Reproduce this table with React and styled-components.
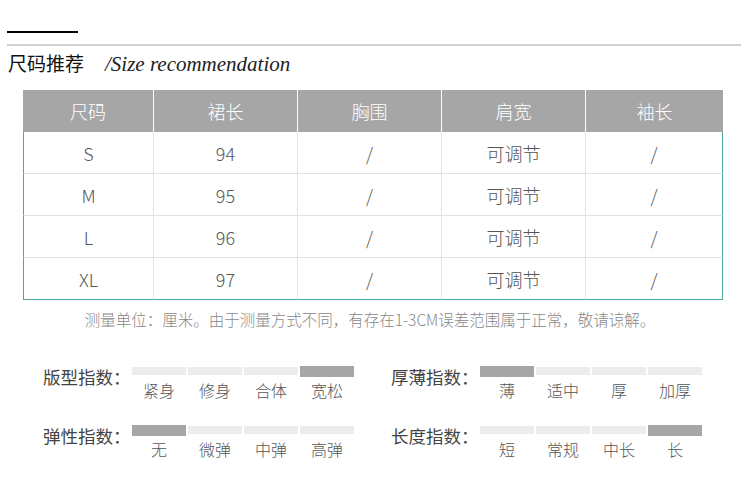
import React from 'react';
import styled, { createGlobalStyle } from 'styled-components';

const GlobalStyle = createGlobalStyle`
  body {
    margin: 0;
    background: #fff;
    font-family: "Noto Sans CJK SC", "Noto Sans", sans-serif;
  }
`;

const columns = ['尺码', '裙长', '胸围', '肩宽', '袖长'];
const rows = [
  ['S', '94', '/', '可调节', '/'],
  ['M', '95', '/', '可调节', '/'],
  ['L', '96', '/', '可调节', '/'],
  ['XL', '97', '/', '可调节', '/'],
];

const indexes = [
  { title: '版型指数：', options: ['紧身', '修身', '合体', '宽松'], active: 3 },
  { title: '厚薄指数：', options: ['薄', '适中', '厚', '加厚'], active: 0 },
  { title: '弹性指数：', options: ['无', '微弹', '中弹', '高弹'], active: 0 },
  { title: '长度指数：', options: ['短', '常规', '中长', '长'], active: 3 },
];

const App = () => {
  return (
    <Page>
      <GlobalStyle />
      <Head>
        <ShortLine />
        <LongLine />
        <TitleRow>
          <Title>尺码推荐</Title>
          <Subtitle>/Size recommendation</Subtitle>
        </TitleRow>
      </Head>

      <Table>
        {columns.map((c, i) => (
          <HeadCell key={c} $last={i === columns.length - 1}>{c}</HeadCell>
        ))}
        {rows.map((r, ri) =>
          r.map((v, ci) => (
            <Cell
              key={ri + '-' + ci}
              $first={ci === 0}
              $last={ci === r.length - 1}
              $bottom={ri === rows.length - 1}
            >
              {v}
            </Cell>
          ))
        )}
      </Table>

      <Note>测量单位：厘米。由于测量方式不同，有存在1-3CM误差范围属于正常，敬请谅解。</Note>

      <IndexGrid>
        {indexes.map((item) => (
          <IndexRow key={item.title}>
            <IndexLabel>{item.title}</IndexLabel>
            <Scale>
              {item.options.map((o, i) => (
                <Step key={o}>
                  <BarSlot>
                    <Bar $active={i === item.active} />
                  </BarSlot>
                  <StepText>{o}</StepText>
                </Step>
              ))}
            </Scale>
          </IndexRow>
        ))}
      </IndexGrid>
    </Page>
  );
};

const Page = styled.div`
  width: 750px;
  height: 488px;
  overflow: hidden;
`;

const Head = styled.div`
  padding: 31px 9px 0 7px;
`;

const ShortLine = styled.div`
  width: 71px;
  height: 2px;
  background: #000;
`;

const LongLine = styled.div`
  margin-top: 11px;
  height: 2px;
  background: #d2d2d2;
`;

const TitleRow = styled.div`
  display: flex;
  align-items: baseline;
  padding-left: 1px;
  margin-top: 3px;
  height: 30px;
`;

const Title = styled.span`
  font-size: 19px;
  color: #111;
  width: 97px;
`;

const Subtitle = styled.span`
  font-family: "Liberation Serif", "Times New Roman", serif;
  font-style: italic;
  font-size: 21px;
  color: #222;
`;

const Table = styled.div`
  margin: 11px 0 0 23px;
  width: 700px;
  display: grid;
  grid-template-columns: 131px 144px 144px 144px 137px;
  grid-template-rows: 42px repeat(4, 42px);
`;

const HeadCell = styled.div`
  background: #a6a6a6;
  color: #fff;
  font-size: 18px;
  font-weight: 300;
  display: flex;
  align-items: center;
  justify-content: center;
  border-right: ${(p) => (p.$last ? 'none' : '1px solid #fff')};
`;

const Cell = styled.div`
  color: #555;
  font-size: 18px;
  font-weight: 300;
  display: flex;
  align-items: center;
  justify-content: center;
  border-right: 1px solid ${(p) => (p.$last ? '#4fa7a0' : '#e2e2e2')};
  border-left: ${(p) => (p.$first ? '1px solid #4fa7a0' : 'none')};
  border-bottom: 1px solid ${(p) => (p.$bottom ? '#4fa7a0' : '#e2e2e2')};
`;

const Note = styled.div`
  margin-top: 8px;
  padding-right: 10px;
  text-align: center;
  font-size: 15.5px;
  line-height: 22px;
  color: #888;
  font-weight: 300;
`;

const IndexGrid = styled.div`
  margin-top: 35px;
  padding-left: 43px;
  display: grid;
  grid-template-columns: 348px 330px;
  row-gap: 24px;
`;

const IndexRow = styled.div`
  display: flex;
  align-items: flex-start;
`;

const IndexLabel = styled.div`
  width: 89px;
  font-size: 17.5px;
  color: #444;
  line-height: 22px;
  margin-top: 1px;
`;

const Scale = styled.div`
  display: flex;
  gap: 2px;
`;

const Step = styled.div`
  width: 54px;
  display: flex;
  flex-direction: column;
  align-items: center;
`;

const BarSlot = styled.div`
  width: 100%;
  height: 12px;
  display: flex;
  align-items: center;
`;

const Bar = styled.div`
  width: 100%;
  height: ${(p) => (p.$active ? '11px' : '8px')};
  background: ${(p) => (p.$active ? '#a6a6a6' : '#ececec')};
`;

const StepText = styled.div`
  margin-top: 3px;
  font-size: 16px;
  font-weight: 300;
  color: #555;
  line-height: 20px;
`;

export default App;
